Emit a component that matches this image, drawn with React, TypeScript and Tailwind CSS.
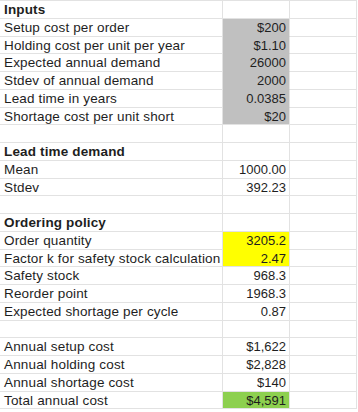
import React from "react";

type Row = {
  label?: string;
  value?: string;
  bold?: boolean;
  fill?: "gray" | "yellow" | "green";
  joinNext?: boolean;
};

const rows: Row[] = [
  { label: "Inputs", bold: true },
  { label: "Setup cost per order", value: "$200", fill: "gray", joinNext: true },
  { label: "Holding cost per unit per year", value: "$1.10", fill: "gray", joinNext: true },
  { label: "Expected annual demand", value: "26000", fill: "gray", joinNext: true },
  { label: "Stdev of annual demand", value: "2000", fill: "gray", joinNext: true },
  { label: "Lead time in years", value: "0.0385", fill: "gray", joinNext: true },
  { label: "Shortage cost per unit short", value: "$20", fill: "gray" },
  {},
  { label: "Lead time demand", bold: true },
  { label: "Mean", value: "1000.00" },
  { label: "Stdev", value: "392.23" },
  {},
  { label: "Ordering policy", bold: true },
  { label: "Order quantity", value: "3205.2", fill: "yellow", joinNext: true },
  { label: "Factor k for safety stock calculation", value: "2.47", fill: "yellow" },
  { label: "Safety stock", value: "968.3" },
  { label: "Reorder point", value: "1968.3" },
  { label: "Expected shortage per cycle", value: "0.87" },
  {},
  { label: "Annual setup cost", value: "$1,622" },
  { label: "Annual holding cost", value: "$2,828" },
  { label: "Annual shortage cost", value: "$140" },
  { label: "Total annual cost", value: "$4,591", fill: "green" },
];

function fillClass(r: Row) {
  if (r.fill === "gray")
    return r.joinNext ? "bg-[#c0c0c0] border-b-[#c0c0c0]" : "bg-[#c0c0c0] border-b-[#e2e2e2]";
  if (r.fill === "yellow")
    return r.joinNext ? "bg-[#ffff00] border-b-[#ffff00]" : "bg-[#ffff00] border-b-[#e2e2e2]";
  if (r.fill === "green") return "bg-[#8dd04f] border-b-[#e2e2e2]";
  return "bg-white border-b-[#e2e2e2]";
}

export default function App() {
  return (
    <div
      className="w-[358px] h-[412px] bg-white overflow-hidden text-[#1e1e1e]"
      style={{ fontFamily: '"Liberation Sans", Arial, sans-serif' }}
    >
      <div className="w-[357px] border-t border-[#e2e2e2]">
        {rows.map((r, i) => (
          <div key={i} className="flex h-[17.75px] leading-[17px]">
            <div
              className={
                "w-[223px] shrink-0 border-r border-b border-[#e2e2e2] pl-[4px] whitespace-nowrap overflow-hidden text-[13.5px] tracking-[0.15px] " +
                (r.bold ? "font-bold" : "")
              }
            >
              {r.label}
            </div>
            <div
              className={
                "w-[67px] shrink-0 border-r border-r-[#e2e2e2] border-b pr-[3px] text-right whitespace-nowrap text-[13px] " +
                fillClass(r)
              }
            >
              {r.value}
            </div>
            <div className="w-[67px] shrink-0 border-r border-b border-[#e2e2e2]" />
          </div>
        ))}
      </div>
    </div>
  );
}
